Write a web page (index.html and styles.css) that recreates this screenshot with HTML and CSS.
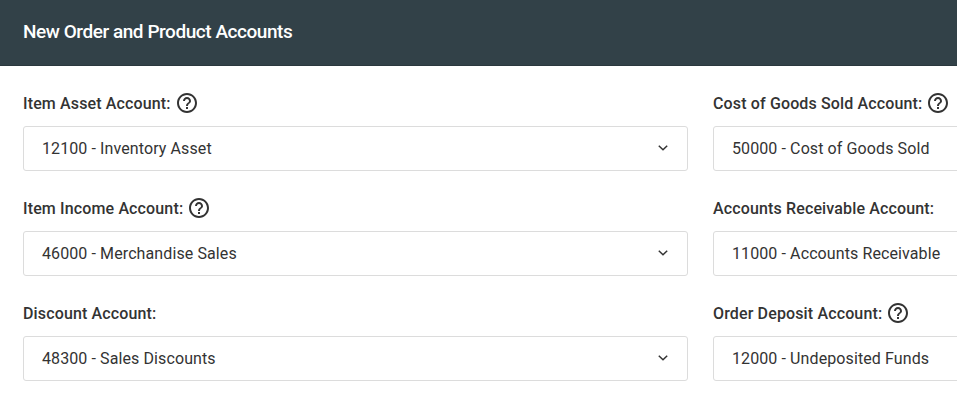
FILE: index.html
```
<!DOCTYPE html>
<html lang="en">
<head>
    <meta charset="UTF-8">
    <meta name="viewport" content="width=device-width, initial-scale=1.0">
    <title>New Order and Product Accounts</title>
    <link rel="stylesheet" href="styles.css">
</head>
<body>

    <svg class="sprite">
        <symbol id="help" viewBox="0 0 24 24">
            <path d="M11 18h2v-2h-2v2zm1-16C6.48 2 2 6.48 2 12s4.48 10 10 10 10-4.48 10-10S17.52 2 12 2zm0 18c-4.41 0-8-3.59-8-8s3.59-8 8-8 8 3.59 8 8-3.59 8-8 8zm0-14c-2.21 0-4 1.79-4 4h2c0-1.1.9-2 2-2s2 .9 2 2c0 2-3 1.75-3 5h2c0-2.25 3-2.5 3-5 0-2.21-1.79-4-4-4z"/>
        </symbol>
        <symbol id="arrow" viewBox="0 0 10 6">
            <path d="M0.8 0.8L5 4.8L9.2 0.8" fill="none" stroke="currentColor" stroke-width="1.5"/>
        </symbol>
    </svg>

    <header class="panel-header">
        <h1>New Order and Product Accounts</h1>
    </header>

    <main class="accounts">
        <div class="field">
            <div class="label">Item Asset Account: <svg class="help"><use href="#help"/></svg></div>
            <div class="select"><span>12100 - Inventory Asset</span><svg class="arrow"><use href="#arrow"/></svg></div>
        </div>
        <div class="field">
            <div class="label">Cost of Goods Sold Account: <svg class="help"><use href="#help"/></svg></div>
            <div class="select"><span>50000 - Cost of Goods Sold</span><svg class="arrow"><use href="#arrow"/></svg></div>
        </div>
        <div class="field">
            <div class="label">Item Income Account: <svg class="help"><use href="#help"/></svg></div>
            <div class="select"><span>46000 - Merchandise Sales</span><svg class="arrow"><use href="#arrow"/></svg></div>
        </div>
        <div class="field">
            <div class="label">Accounts Receivable Account:</div>
            <div class="select"><span>11000 - Accounts Receivable</span><svg class="arrow"><use href="#arrow"/></svg></div>
        </div>
        <div class="field">
            <div class="label">Discount Account:</div>
            <div class="select"><span>48300 - Sales Discounts</span><svg class="arrow"><use href="#arrow"/></svg></div>
        </div>
        <div class="field">
            <div class="label">Order Deposit Account: <svg class="help"><use href="#help"/></svg></div>
            <div class="select"><span>12000 - Undeposited Funds</span><svg class="arrow"><use href="#arrow"/></svg></div>
        </div>
    </main>

</body>
</html>
```

FILE: styles.css
```
* {
    box-sizing: border-box;
}
body {
    font-family: Roboto, "Liberation Sans", sans-serif;
    font-size: 16px;
    color: #333;
    background-color: #fff;
    margin: 0;
    overflow: hidden;
}
.sprite {
    display: none;
}
.panel-header {
    display: flex;
    align-items: center;
    height: 66px;
    padding: 0 23px 3px;
    background-color: #324148;
    border-bottom: 1px solid #2b383e;
}
.panel-header h1 {
    margin: 0;
    font-size: 19px;
    font-weight: 500;
    letter-spacing: -0.45px;
    color: #fff;
}
.accounts {
    display: grid;
    grid-template-columns: 665px 665px;
    column-gap: 25px;
    row-gap: 25px;
    padding: 25px 23px;
    overflow: hidden;
}
.label {
    display: flex;
    align-items: center;
    gap: 4px;
    height: 24px;
    margin-bottom: 11px;
    font-weight: 500;
    letter-spacing: 0.14px;
}
.help {
    width: 24px;
    height: 24px;
    fill: currentColor;
}
.select {
    display: flex;
    align-items: center;
    justify-content: space-between;
    height: 45px;
    padding: 0 19px 0 18px;
    border: 1px solid #dcdcdc;
    border-radius: 3px;
    letter-spacing: 0.1px;
}
.arrow {
    width: 10px;
    height: 6px;
    margin-bottom: 1px;
}
```
